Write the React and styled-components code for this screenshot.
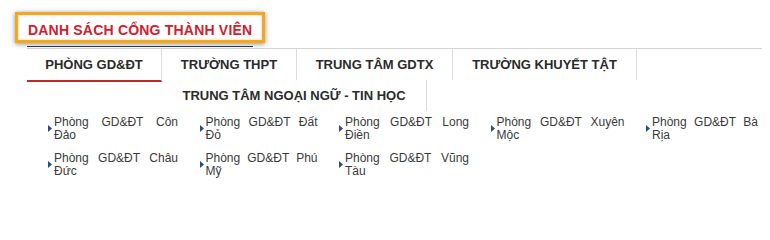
import React from "react";
import styled, { createGlobalStyle } from "styled-components";

const Global = createGlobalStyle`
  html, body { margin: 0; padding: 0; background: #fff; }
  body { font-family: "Liberation Sans", Arial, sans-serif; }
`;

const Page = styled.div`
  padding: 20px 8px 0 27px;
`;

const TitleWrap = styled.div`
  margin-bottom: 1px;
`;

const Title = styled.h2`
  position: relative;
  display: inline-block;
  margin: 0;
  padding: 0 1px 6px 1px;
  font-size: 14px;
  line-height: 20px;
  font-weight: bold;
  letter-spacing: 0.2px;
  color: #d0202e;
  text-transform: uppercase;
  border-bottom: 1px solid #2c3e55;
  &::after {
    content: "";
    position: absolute;
    left: -12px;
    right: -12px;
    top: -8px;
    bottom: 3px;
    border: 3px solid #f5a81c;
    box-shadow: 0 1px 5px rgba(0, 0, 0, 0.45), inset 0 0 3px rgba(0, 0, 0, 0.2);
    pointer-events: none;
  }
`;

const Tabs = styled.ul`
  display: flow-root;
  list-style: none;
  margin: 0;
  padding: 0;
  border-top: 1px solid #d4d4d4;
`;

const Tab = styled.li`
  float: left;
  box-sizing: border-box;
  width: ${(p) => p.$w}px;
  height: ${(p) => (p.$active ? 33 : 31)}px;
  line-height: 31px;
  text-align: center;
  font-size: 13px;
  font-weight: bold;
  color: #2b2b2b;
  border-right: 1px solid #dcdcdc;
  border-bottom: ${(p) => (p.$active ? "2px solid #c0282d" : "none")};
  white-space: nowrap;
`;

const List = styled.div`
  display: grid;
  grid-template-columns: 134px 122px 134px 138px 1fr;
  column-gap: 17.5px;
  row-gap: 10px;
  margin-top: 4.5px;
  padding: 0 4px 0 17px;
`;

const Item = styled.a`
  display: flex;
  align-items: center;
  text-decoration: none;
  color: #3a3a3a;
  font-size: 12px;
  line-height: 13px;
`;

const Arrow = styled.svg`
  flex: none;
  width: 4px;
  height: 7px;
  margin: 0 2px 0 4px;
`;

const ItemText = styled.span`
  flex: 1;
  text-align: justify;
`;

const tabs = [
  { label: "PHÒNG GD&ĐT", w: 135, active: true },
  { label: "TRƯỜNG THPT", w: 135 },
  { label: "TRUNG TÂM GDTX", w: 156 },
  { label: "TRƯỜNG KHUYẾT TẬT", w: 184 },
  { label: "TRUNG TÂM NGOẠI NGỮ - TIN HỌC", w: 265 },
];

const items = [
  "Phòng GD&ĐT Côn Đảo",
  "Phòng GD&ĐT Đất Đỏ",
  "Phòng GD&ĐT Long Điền",
  "Phòng GD&ĐT Xuyên Mộc",
  "Phòng GD&ĐT Bà Rịa",
  "Phòng GD&ĐT Châu Đức",
  "Phòng GD&ĐT Phú Mỹ",
  "Phòng GD&ĐT Vũng Tàu",
];

export default function App() {
  return (
    <>
      <Global />
      <Page>
        <TitleWrap>
          <Title>Danh sách cổng thành viên</Title>
        </TitleWrap>
        <Tabs>
          {tabs.map((t) => (
            <Tab key={t.label} $w={t.w} $active={t.active}>
              {t.label}
            </Tab>
          ))}
        </Tabs>
        <List>
          {items.map((it) => (
            <Item key={it} href="#">
              <Arrow viewBox="0 0 4 7">
                <path d="M0 0 L4 3.5 L0 7 Z" fill="#1f4f8f" />
              </Arrow>
              <ItemText>{it}</ItemText>
            </Item>
          ))}
        </List>
      </Page>
    </>
  );
}
